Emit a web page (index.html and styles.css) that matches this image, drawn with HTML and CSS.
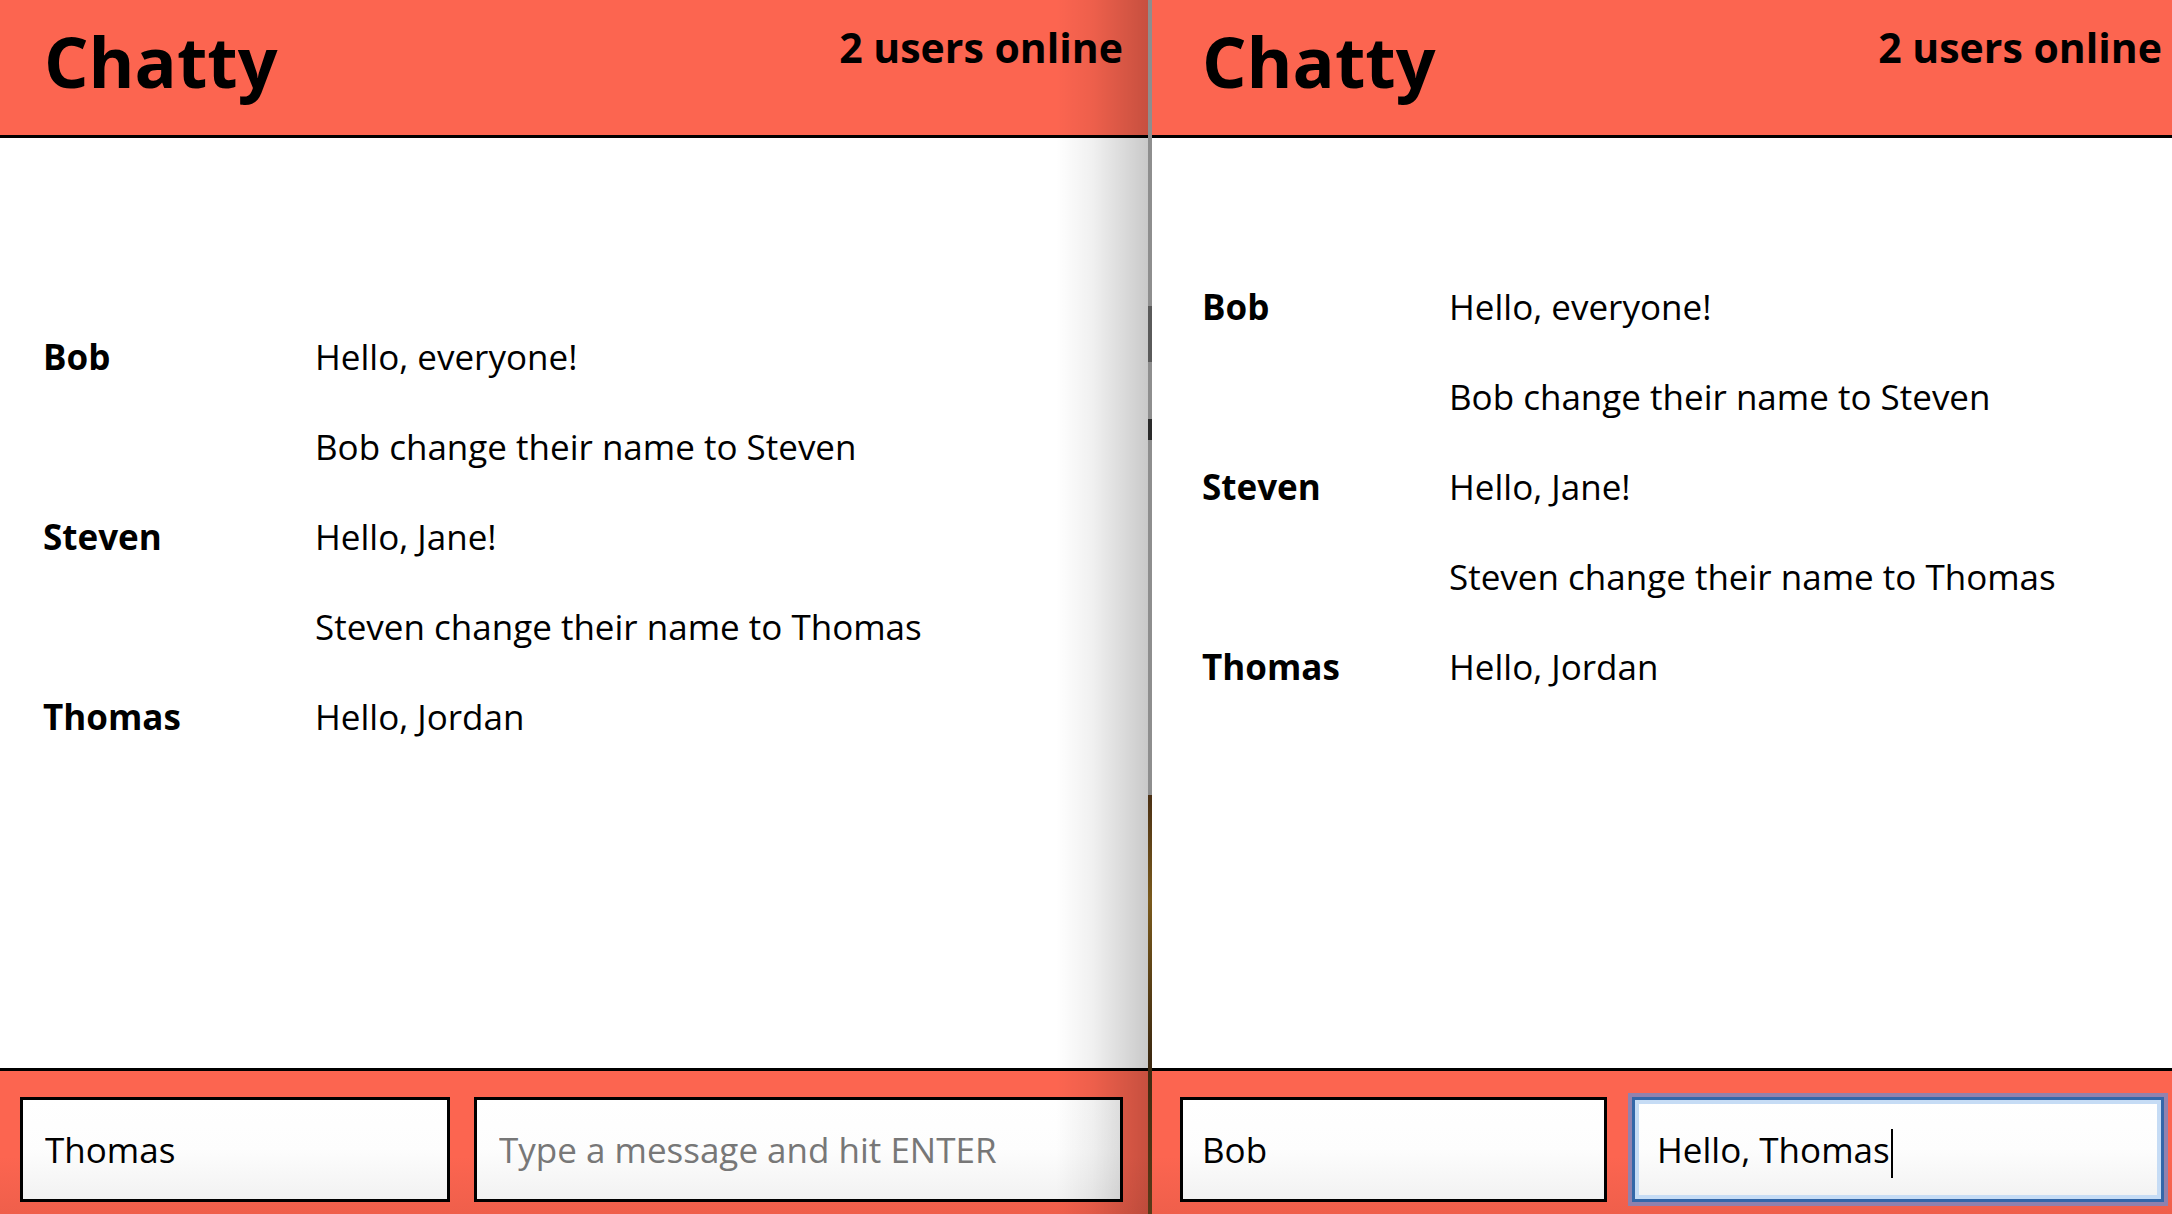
FILE: index.html
```html
<!DOCTYPE html>
<html lang="en">
<head>
<meta charset="utf-8">
<title>Chatty</title>
<link rel="stylesheet" href="styles.css">
</head>
<body>
<div class="screen">
  <section class="window window-left">
    <header class="navbar">
      <span class="brand">Chatty</span>
      <span class="online">2 users online</span>
    </header>
    <main class="messages">
      <div class="message"><span class="username">Bob</span><span class="content">Hello, everyone!</span></div>
      <div class="message system"><span class="username"></span><span class="content">Bob change their name to Steven</span></div>
      <div class="message"><span class="username">Steven</span><span class="content">Hello, Jane!</span></div>
      <div class="message system"><span class="username"></span><span class="content">Steven change their name to Thomas</span></div>
      <div class="message"><span class="username">Thomas</span><span class="content">Hello, Jordan</span></div>
    </main>
    <footer class="chatbar">
      <input class="field field-name" type="text" value="Thomas">
      <input class="field field-message" type="text" placeholder="Type a message and hit ENTER">
    </footer>
  </section>
  <div class="divider"></div>
  <section class="window window-right">
    <header class="navbar">
      <span class="brand">Chatty</span>
      <span class="online">2 users online</span>
    </header>
    <main class="messages">
      <div class="message"><span class="username">Bob</span><span class="content">Hello, everyone!</span></div>
      <div class="message system"><span class="username"></span><span class="content">Bob change their name to Steven</span></div>
      <div class="message"><span class="username">Steven</span><span class="content">Hello, Jane!</span></div>
      <div class="message system"><span class="username"></span><span class="content">Steven change their name to Thomas</span></div>
      <div class="message"><span class="username">Thomas</span><span class="content">Hello, Jordan</span></div>
    </main>
    <footer class="chatbar">
      <input class="field field-name" type="text" value="Bob">
      <div class="field field-message field-focused">Hello, Thomas<span class="caret"></span></div>
    </footer>
  </section>
</div>
</body>
</html>
```
FILE: styles.css
```css
* { box-sizing: border-box; }

html, body {
  margin: 0;
  padding: 0;
}

body {
  width: 2172px;
  height: 1214px;
  overflow: hidden;
  background: #fff;
  font-family: "Open Sans", "Noto Sans", sans-serif;
  color: #000;
}

.screen {
  display: flex;
  height: 1214px;
}

.window {
  display: flex;
  flex-direction: column;
  height: 1214px;
  background: #fff;
  position: relative;
}

.window-left {
  width: 1148px;
  flex: none;
}

.window-left::after {
  content: "";
  position: absolute;
  top: 0;
  right: 0;
  bottom: 0;
  width: 92px;
  background: linear-gradient(to right, rgba(0,0,0,0) 0%, rgba(0,0,0,0.06) 40%, rgba(0,0,0,0.21) 100%);
  pointer-events: none;
}

.window-right {
  flex: 1;
}

.divider {
  width: 4px;
  flex: none;
  background: linear-gradient(to bottom,
    #8e8e8e 0, #8e8e8e 306px,
    #5a5a5a 306px, #5a5a5a 362px,
    #8e8e8e 362px, #8e8e8e 419px,
    #2a2a2a 419px, #2a2a2a 440px,
    #8e8e8e 440px, #8e8e8e 795px,
    #4a3014 795px, #7a5a1c 900px, #3c2810 1060px, #5a3a18 1214px);
}

/* Header */
.navbar {
  height: 138px;
  flex: none;
  background: #fc6550;
  border-bottom: 3px solid #000;
  display: flex;
  justify-content: space-between;
  align-items: flex-start;
  padding-top: 26px;
}

.window-left .navbar { padding-left: 44px; padding-right: 25px; }
.window-right .navbar { padding-left: 50px; padding-right: 10px; }

.brand {
  font-size: 70px;
  font-weight: 700;
  line-height: 1;
}

.online {
  font-size: 41px;
  font-weight: 700;
  line-height: 1;
  margin-top: 1px;
}

/* Messages */
.messages {
  flex: 1;
  display: flex;
  flex-direction: column;
}

.window-left .messages { padding: 174px 0 0 43px; }
.window-right .messages { padding: 124px 0 0 50px; }

.message {
  display: flex;
  font-size: 35px;
  line-height: 90px;
  height: 90px;
  white-space: nowrap;
}

.username {
  font-weight: 700;
  flex: none;
}

.window-left .username { width: 272px; }
.window-right .username { width: 247px; }

/* Chat bar */
.chatbar {
  height: 146px;
  flex: none;
  background: linear-gradient(to bottom, #fc6550 0%, #fc6550 60%, #ef5f4b 100%);
  border-top: 3px solid #000;
  display: flex;
  padding-top: 26px;
}

.window-left .chatbar { padding-left: 20px; padding-right: 25px; gap: 24px; }
.window-right .chatbar { padding-left: 28px; padding-right: 8px; gap: 25px; }

.field {
  height: 105px;
  border: 3px solid #000;
  background: linear-gradient(to bottom, #ffffff 0%, #fdfdfd 50%, #f2f2f2 100%);
  font-family: "Open Sans", "Noto Sans", sans-serif;
  font-size: 35px;
  color: #000;
  padding: 0 19px;
  outline: none;
  border-radius: 0;
  margin: 0;
}

.window-left .field { padding-left: 22px; }

.field::placeholder {
  color: #777;
}

.window-left .field-name { width: 430px; flex: none; }
.window-right .field-name { width: 427px; flex: none; }

.field-message { flex: 1; min-width: 0; }

.field-focused {
  display: flex;
  align-items: center;
  white-space: pre;
  border-color: #3367a9;
  box-shadow: 0 0 0 4px rgba(110, 140, 205, 0.75), inset 0 0 0 4px #c6dcf5;
  padding-left: 22px;
}

.caret {
  display: inline-block;
  width: 2px;
  height: 49px;
  background: #000;
  margin-left: 1px;
  align-self: center;
  position: relative;
  top: 4px;
}
```
